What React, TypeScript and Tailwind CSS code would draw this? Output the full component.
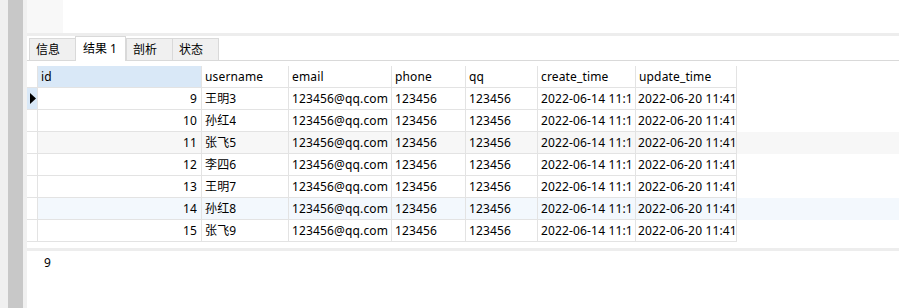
const COLS = [
	{ key: 'id', label: 'id', w: 'w-[164px]', pad: 'justify-end pr-[4px]' },
	{ key: 'username', label: 'username', w: 'w-[87px]', pad: 'pl-[3px] pr-[2px]' },
	{ key: 'email', label: 'email', w: 'w-[103px]', pad: 'pl-[3px] pr-[2px]' },
	{ key: 'phone', label: 'phone', w: 'w-[74px]', pad: 'pl-[3px] pr-[2px]' },
	{ key: 'qq', label: 'qq', w: 'w-[72px]', pad: 'pl-[3px] pr-[2px]' },
	{ key: 'create_time', label: 'create_time', w: 'w-[98px]', pad: 'pl-[3px] pr-[2px]' },
	{ key: 'update_time', label: 'update_time', w: 'w-[101px]', pad: 'pl-[2px] pr-0' }
];

const NAMES = ['王明3', '孙红4', '张飞5', '李四6', '王明7', '孙红8', '张飞9'];

const ROWS = NAMES.map((name, i) => ({
	id: String(9 + i),
	username: name,
	email: '123456@qq.com',
	phone: '123456',
	qq: '123456',
	create_time: '2022-06-14 11:16:02',
	update_time: '2022-06-20 11:41:37'
}));

const TABS = [
	{ label: '信息', w: 'w-[46px]' },
	{ label: '结果 1', w: 'w-[51px]', active: true },
	{ label: '剖析', w: 'w-[46px]' },
	{ label: '状态', w: 'w-[47px]' }
];

export default function App() {
	return (
		<div className="flex h-[308px] w-[899px] overflow-hidden bg-white text-[12px] text-black [font-family:'Noto_Sans','Noto_Sans_CJK_SC',sans-serif]">
			{/* left frame strips */}
			<div className="w-[8px] bg-[#f0f0f0]" />
			<div className="w-[15px] bg-[#c8c8c8]" />
			<div className="w-[4px] bg-[#f0f0f0]" />

			<div className="flex min-w-0 flex-1 flex-col">
				<div className="flex h-[33px]">
					<div className="w-[36px] bg-[#f8f8f8]" />
					<div className="flex-1" />
				</div>
				<div className="h-[3px] bg-[#ededed]" />

				{/* tabs */}
				<div className="flex h-[25px] items-end border-b border-[#d9d9d9] pl-[2px]">
					{TABS.map((t) =>
						t.active ? (
							<div
								key={t.label}
								className={`${t.w} relative -mb-px flex h-[25px] items-center border-x border-t border-[#d9d9d9] bg-white pl-[7px] leading-none`}
							>
								{t.label}
							</div>
						) : (
							<div
								key={t.label}
								className={`${t.w} flex h-[22px] items-center border-l border-t border-[#d9d9d9] bg-[#f0f0f0] pl-[6px] leading-none last:border-r`}
							>
								{t.label}
							</div>
						)
					)}
				</div>

				<div className="h-[5px]" />

				{/* result grid */}
				<div className="flex flex-col tracking-[0.15px]">
					<div className="flex h-[22px]">
						<div className="w-[11px] border-r border-b border-[#e3e3e3]" />
						{COLS.map((c, ci) => (
							<div
								key={c.key}
								className={`${c.w} flex items-center overflow-hidden whitespace-nowrap border-r border-b border-[#e3e3e3] pl-[3px] ${
									ci === 0 ? 'bg-[#d9e8f7]' : 'bg-white'
								}`}
							>
								{c.label}
							</div>
						))}
					</div>
					{ROWS.map((r, ri) => (
						<div
							key={r.id}
							className={`flex h-[22px] ${
								ri === 2 ? 'bg-[#f7f7f7]' : ri === 5 ? 'bg-[#f3f8fd]' : 'bg-transparent'
							}`}
						>
							<div
								className={`flex w-[11px] items-center border-r border-b border-[#e3e3e3] pl-[3px] ${
									ri === 0 ? 'bg-[#d9e8f7]' : 'bg-white'
								}`}
							>
								{ri === 0 && (
									<svg width="6" height="11" viewBox="0 0 6 11">
										<path d="M0 0 L6 5.5 L0 11 Z" fill="#000" />
									</svg>
								)}
							</div>
							{COLS.map((c) => (
								<div
									key={c.key}
									className={`${c.w} flex items-center border-r border-b border-[#e3e3e3] ${c.pad}`}
								>
									<span className="block min-w-0 overflow-hidden whitespace-nowrap">
										{r[c.key as keyof typeof r]}
									</span>
								</div>
							))}
						</div>
					))}
				</div>

				<div className="h-[6px]" />
				<div className="h-[3px] bg-[#ededed]" />
				<div className="pl-[17px] pt-[3px]">9</div>
			</div>
		</div>
	);
}
